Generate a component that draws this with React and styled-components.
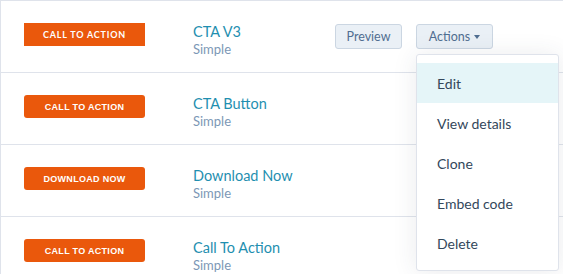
import React from "react"
import styled, { createGlobalStyle } from "styled-components"

const GlobalStyle = createGlobalStyle`
  body {
    margin: 0;
    background: #ffffff;
    font-family: Lato, "Open Sans", sans-serif;
  }
`

const rows = [
  { label: "CALL TO ACTION", name: "CTA V3", type: "Simple", square: true, actions: true },
  { label: "CALL TO ACTION", name: "CTA Button", type: "Simple", arial: true },
  { label: "DOWNLOAD NOW", name: "Download Now", type: "Simple", arial: true },
  { label: "CALL TO ACTION", name: "Call To Action", type: "Simple", arial: true },
]

const menuItems = ["Edit", "View details", "Clone", "Embed code", "Delete"]

const Table = styled.div`
  border-top: 1px solid #dfe3eb;
  border-left: 1px solid #dfe3eb;
  width: 563px;
  box-sizing: border-box;
`

const Row = styled.div`
  display: flex;
  align-items: flex-start;
  height: 71px;
  border-bottom: 1px solid #dfe3eb;
  padding-left: 23px;
`

const CtaButton = styled.div`
  margin-top: 22px;
  width: 121px;
  height: 23px;
  display: flex;
  align-items: center;
  justify-content: center;
  background: #ea580c;
  border-radius: ${p => (p.$square ? "0" : "3px")};
  color: #fff;
  font-family: ${p => (p.$arial ? '"Liberation Sans", Arial, sans-serif' : 'Lato, sans-serif')};
  font-weight: 700;
  font-size: 9px;
  letter-spacing: ${p => (p.$arial ? "0.3px" : "0.8px")};
`

const NameCell = styled.div`
  margin-left: 48px;
  margin-top: 22px;
  width: 142px;
  display: flex;
  flex-direction: column;
`

const Title = styled.span`
  color: #1f8fb0;
  font-size: 14.5px;
  line-height: 17px;
`

const Subtitle = styled.span`
  color: #7c98b6;
  font-size: 13px;
  line-height: 15px;
  margin-top: 2px;
`

const Actions = styled.div`
  display: flex;
  gap: 14px;
  margin-top: 23px;
  position: relative;
`

const GhostButton = styled.button`
  height: 25px;
  padding: 0;
  width: ${p => p.$w}px;
  background: #eaf0f6;
  border: 1px solid #cbd6e2;
  border-radius: 3px;
  color: #506e91;
  font-family: Lato, sans-serif;
  font-size: 12.5px;
  display: flex;
  align-items: center;
  justify-content: center;
  gap: 4px;
`

const Caret = styled.span`
  width: 0;
  height: 0;
  border-left: 3.5px solid transparent;
  border-right: 3.5px solid transparent;
  border-top: 4px solid #506e91;
  margin-top: 1px;
`

const Menu = styled.div`
  position: absolute;
  top: 30px;
  left: 81px;
  width: 143px;
  box-sizing: border-box;
  padding: 8px 0 7px;
  background: #fff;
  border: 1px solid #dfe3eb;
  border-radius: 3px;
  box-shadow: 0 1px 24px rgba(45, 62, 80, 0.1);
  z-index: 2;
`

const MenuItem = styled.div`
  height: 40px;
  display: flex;
  align-items: center;
  padding-left: 20px;
  color: #33475b;
  font-size: 14px;
  background: ${p => (p.$active ? "#e5f5f8" : "transparent")};
`

export default function App() {
  return (
    <>
      <GlobalStyle />
      <Table>
        {rows.map((r, i) => (
          <Row key={i}>
            <CtaButton $square={r.square} $arial={r.arial}>{r.label}</CtaButton>
            <NameCell>
              <Title>{r.name}</Title>
              <Subtitle>{r.type}</Subtitle>
            </NameCell>
            {r.actions && (
              <Actions>
                <GhostButton $w={67}>Preview</GhostButton>
                <GhostButton $w={77}>
                  Actions <Caret />
                </GhostButton>
                <Menu>
                  {menuItems.map((m, j) => (
                    <MenuItem key={m} $active={j === 0}>{m}</MenuItem>
                  ))}
                </Menu>
              </Actions>
            )}
          </Row>
        ))}
      </Table>
    </>
  )
}
